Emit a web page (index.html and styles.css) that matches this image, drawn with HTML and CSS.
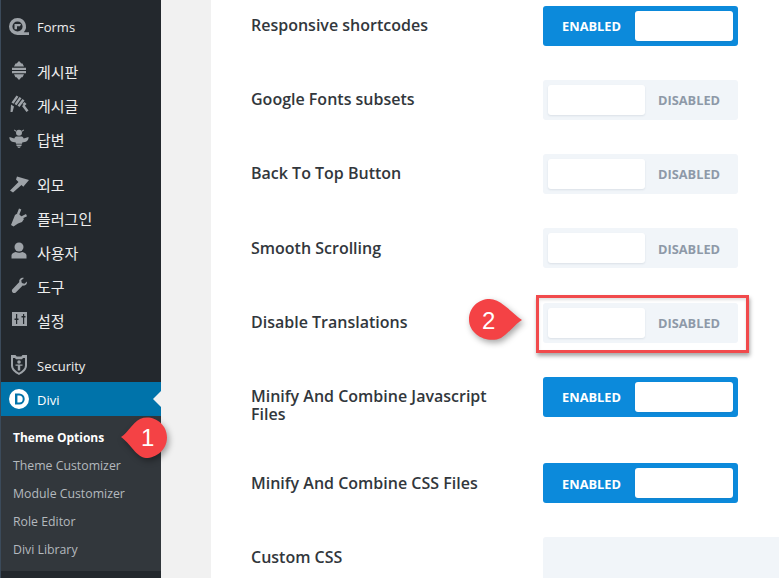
FILE: index.html
```html
<!DOCTYPE html>
<html lang="ko">
<head>
<meta charset="utf-8">
<title>Divi Theme Options</title>
<link rel="stylesheet" href="styles.css">
</head>
<body>
<div class="page">
  <nav class="sidebar">
    <ul class="menu">
      <li class="item"><svg class="icon" viewBox="0 0 20 20"><path fill-rule="evenodd" d="M8.500 1a8.500 8.500 0 0 1 6.300 14.200H20V18H8.500a8.500 8.500 0 0 1 0-17zm0 3.400a5.100 5.100 0 1 0 0 10.200 5.100 5.100 0 0 0 0-10.200z"/><path d="M5.500 7h6.500l-1 2.200H8v3H5.500z"/></svg><span class="en">Forms</span></li>
    </ul>
    <ul class="menu group-a">
      <li class="item"><svg class="icon" viewBox="0 0 20 20"><path d="M10 0l2.500 2.500h1l1.500 3H5l1.500-3h1zM3 6.800h14v2.200H3zM3 10h14v2.200H3zM5 13.200h10l-1.500 3h-1L10 19l-2.500-2.800h-1z"/></svg><span class="ko">게시판</span></li>
      <li class="item"><svg class="icon" viewBox="0 0 20 20"><path d="M7.500.500l2 1.200-5 7-2-1.200zM10.500 2l2 1.300-5 7-2-1.300zM13.500 4l2 1.500-5 6.500-2-1.500zM15.500 7l2 2-2 2-2-2zM13 11l2-1.500 4.500 6-2 1.500zM2 9.500l3 2-1.500 5.500H1.500z"/></svg><span class="ko">게시글</span></li>
      <li class="item"><svg class="icon" viewBox="0 0 20 20"><circle cx="10" cy="3.800" r="3"/><path d="M5.500.500l2 1.500-.6.800-2-1.500zM14.500.500l-2 1.500.6.800 2-1.500z"/><path d="M7 7.500h6c1 .5 1.500 1.200 1.700 2l4.800-1.500c.5 2.500-1.500 5-5 5.200h-1L13 14.800H7l-.5-1.600h-1C2 13 0 10.500.5 8l4.800 1.500c.2-.8.700-1.500 1.700-2z"/><path d="M7.200 15.600h5.600l-.4 1.300H7.600zM8 17.600h4c-.5.900-1.200 1.400-2 1.400s-1.500-.5-2-1.400z"/></svg><span class="ko">답변</span></li>
    </ul>
    <ul class="menu group-b">
      <li class="item"><svg class="icon" viewBox="0 0 20 20"><path d="M8 2.500l12 3.500-5.700 6.700-1.800-1.700-8.500 7.500-3-2 8.500-8.500L7 5.500z"/></svg><span class="ko">외모</span></li>
      <li class="item"><svg class="icon" viewBox="0 0 20 20"><path d="M10 .500l2.300 1-2 5-2.300-1zM17 6l1 2.200-5 2.500-1-2.200zM6 7l3-2 6 6-2 3-4 1.500-4.500 3L2 17l2-5z"/></svg><span class="ko">플러그인</span></li>
      <li class="item"><svg class="icon" viewBox="0 0 20 20"><circle cx="10" cy="5" r="4.500"/><path d="M2.500 16.500v-3c0-2 2-3 4.300-3.500 1.500 1 4.900 1 6.400 0 2.300.500 4.300 1.500 4.300 3.500v3z"/></svg><span class="ko">사용자</span></li>
      <li class="item"><svg class="icon" viewBox="0 0 20 20"><g transform="translate(2 1) scale(.85)"><path d="M14 1c-2.800 0-4.800 2.300-4.200 5L1.700 14.300c-1.100 1.100-.7 3 .2 3.800.9.900 2.600 1.200 3.700.1L13.800 10c3 .8 5.500-1.700 5-4.800l-3 2.800-3-.8-.8-3 3.200-3c-.4-.1-.8-.2-1.200-.2z"/></g></svg><span class="ko">도구</span></li>
      <li class="item"><svg class="icon" viewBox="0 0 20 20"><path fill-rule="evenodd" d="M3 2h15v14H3zM7 4v4.500H5.500V10H7v4h1.200v-4h1.300V8.500H8.200V4zM14 4v2H12.500v1.500H14V14h1.200V7.500h1.300V6h-1.300V4z"/></svg><span class="ko">설정</span></li>
    </ul>
    <ul class="menu group-c">
      <li class="item"><svg class="icon" viewBox="0 0 20 20"><path fill-rule="evenodd" d="M2 0h4.500l1.200 1.500h4.600L13.500 0H18v10.500c0 4-3.500 7.300-8 9.500-4.500-2.200-8-5.500-8-9.500zM4 3v7.500c0 3 2.700 5.400 6 7.200 3.300-1.800 6-4.200 6-7.200V3h-2l-1 1.300H7L6 3z"/><circle cx="10" cy="7" r="1.800"/><path d="M6.500 9.500h7v1.300h-2.300v4.700H8.800v-4.700H6.500z"/></svg><span class="en en-security">Security</span></li>
      <li class="item item-current"><svg class="icon icon-divi" viewBox="0 0 20 20"><path fill-rule="evenodd" d="M10 0a10 10 0 1 1 0 20 10 10 0 0 1 0-20zM6 4.500v11h4.200a5.500 5.500 0 0 0 0-11zm2.400 2h1.800a3.500 3.500 0 0 1 0 7H8.400z"/></svg><span class="en">Divi</span></li>
    </ul>
    <ul class="submenu">
      <li class="sub sub-current">Theme Options</li>
      <li class="sub">Theme Customizer</li>
      <li class="sub">Module Customizer</li>
      <li class="sub">Role Editor</li>
      <li class="sub">Divi Library</li>
    </ul>
  </nav>
  <div class="gutter"></div>
  <main class="panel">
    <div class="row"><div class="label">Responsive shortcodes</div><div class="toggle on"><span class="state">ENABLED</span><span class="knob"></span></div></div>
    <div class="row"><div class="label">Google Fonts subsets</div><div class="toggle off"><span class="knob"></span><span class="state">DISABLED</span></div></div>
    <div class="row"><div class="label">Back To Top Button</div><div class="toggle off"><span class="knob"></span><span class="state">DISABLED</span></div></div>
    <div class="row"><div class="label">Smooth Scrolling</div><div class="toggle off"><span class="knob"></span><span class="state">DISABLED</span></div></div>
    <div class="row"><div class="label">Disable Translations</div><div class="toggle off"><span class="knob"></span><span class="state">DISABLED</span></div></div>
    <div class="row row-tall"><div class="label">Minify And Combine Javascript Files</div><div class="toggle on"><span class="state">ENABLED</span><span class="knob"></span></div></div>
    <div class="row row-after-tall"><div class="label">Minify And Combine CSS Files</div><div class="toggle on"><span class="state">ENABLED</span><span class="knob"></span></div></div>
    <div class="row"><div class="label">Custom CSS</div><div class="textarea"></div></div>
  </main>
  <svg class="callout callout-one" viewBox="0 0 47 42"><path d="M1 20C8 16 12 6 20 2 32-3 47 6 47 20.500 47 33 36 41 26 41 17 41 10 26 1 20z"/></svg>
  <span class="callout-num num-one">1</span>
  <svg class="callout callout-two" viewBox="0 0 54 42"><path d="M53 21C46 25 40 34 32 39 19 45 0 36 0 20.500 0 8 10 0 20.500 0 32 0 44 15 53 21z"/></svg>
  <span class="callout-num num-two">2</span>
  <div class="highlight"></div>
</div>
</body>
</html>
```

FILE: styles.css
```css
* { box-sizing: border-box; }
html, body { margin: 0; padding: 0; }
body { width: 779px; height: 578px; overflow: hidden; background: #fff; font-family: "Open Sans", "Noto Sans CJK KR", sans-serif; }
.page { position: relative; display: flex; width: 779px; height: 578px; overflow: hidden; }

.sidebar { flex: 0 0 161px; background: #23282d; border-left: 1px solid #3b4a5a; padding-top: 10px; color: #eee; }
.menu, .submenu { list-style: none; margin: 0; padding: 0; }
.group-a { margin-top: 10px; }
.group-b { margin-top: 11px; }
.group-c { margin-top: 11px; }
.item { position: relative; display: flex; align-items: center; height: 34px; padding-left: 8px; }
.icon { flex: 0 0 20px; width: 20px; height: 20px; fill: #9ea3a8; margin-right: 8px; }
.en { font-size: 13px; color: #eee; }
.en-security { margin-top: 2px; }
.ko { font-size: 15px; color: #eee; font-family: "Noto Sans CJK KR", sans-serif; }
.item-current { background: #0073aa; }
.item-current .en { color: #fff; margin-top: 2px; }
.item-current .icon { fill: #fff; }
.item-current::after { content: ""; position: absolute; right: 0; top: 9px; border: 8px solid transparent; border-right-color: #f1f1f1; border-left-width: 0; }
.submenu { background: #32373c; padding: 8px 0 7px; }
.sub { height: 28px; line-height: 28px; padding-left: 12px; font-size: 12.300px; color: #b4b9be; }
.sub-current { color: #fff; font-weight: 700; font-size: 12px; }

.gutter { flex: 0 0 50px; background: #f1f1f1; }

.panel { flex: 1; padding: 6px 0 0 40px; background: #fff; }
.row { display: flex; align-items: flex-start; margin-bottom: 34.150px; }
.row-tall { min-height: 52.550px; }
.row-after-tall { margin-bottom: 33.700px; }
.label { flex: 0 0 292px; padding: 10.100px 40px 0 0; font-size: 16px; line-height: 18px; font-weight: 600; color: #32373c; }
.row-tall .label, .row-after-tall .label { padding-top: 10.600px; }
.row-after-tall + .row .label { padding-top: 11.400px; }
.toggle { display: flex; align-items: center; justify-content: space-between; flex: 0 0 195px; height: 40px; padding: 5px; border-radius: 3px; font-size: 12.800px; font-weight: 700; }
.toggle.on { background: #0c8adb; color: #fff; }
.toggle.off { background: #f1f5f9; color: #8e99a8; }
.state { flex: 1; text-align: center; padding-top: .300px; }
.knob { flex: 0 0 98px; height: 30px; background: #fff; border-radius: 3px; box-shadow: 0 1px 2px rgba(60, 80, 110, .12); }
.toggle.off .knob { flex-basis: 97px; }
.textarea { flex: 0 0 260px; height: 120px; background: #f1f5f9; border-radius: 3px; }

.callout { position: absolute; fill: #f44245; filter: drop-shadow(2px 3px 3px rgba(0, 0, 0, .35)); overflow: visible; }
.callout-one { left: 120px; top: 417px; width: 47px; height: 42px; }
.callout-two { left: 469px; top: 299px; width: 54px; height: 42px; }
.callout-num { position: absolute; font-family: "Liberation Sans", sans-serif; font-size: 24px; line-height: 24px; color: #fff; }
.num-one { left: 141px; top: 426px; }
.num-two { left: 482px; top: 309px; }
.highlight { position: absolute; left: 536px; top: 295px; width: 213px; height: 58px; border: 3px solid #f14a4c; box-shadow: 1px 3px 4px rgba(0, 0, 0, .35), inset 0 2px 3px rgba(0, 0, 0, .12); }
```
